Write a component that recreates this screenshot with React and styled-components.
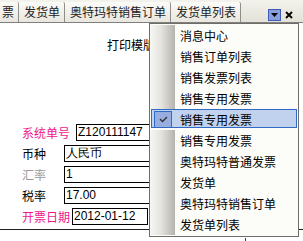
import React from 'react';
import styled, { createGlobalStyle } from 'styled-components';

const GlobalStyle = createGlobalStyle`
  html, body {
    margin: 0;
    padding: 0;
    background: #ffffff;
  }
  body {
    font-family: "Noto Sans CJK SC", "Liberation Sans", sans-serif;
    font-size: 12px;
  }
`;

const Page = styled.div`
  position: relative;
  width: 303px;
  height: 241px;
  overflow: hidden;
  background: #ffffff;
`;

const TabBar = styled.div`
  display: flex;
  align-items: flex-end;
  height: 22px;
  background: linear-gradient(#f3f2ec, #e3e1d8);
  border-bottom: 1px solid #7f7f7f;
  overflow: hidden;
`;

const TabStrip = styled.div`
  display: flex;
  align-items: flex-end;
  height: 20px;
`;

const Tab = styled.div`
  display: flex;
  align-items: center;
  height: 20px;
  padding: ${(p) => (p.$first ? '0 4px 0 2px' : '0 4px 0 5px')};
  border-right: 1px solid #8e8e8a;
  border-top-right-radius: 2px;
  background: linear-gradient(#fbfbf8, #e8e6de);
  color: #222;
  font-size: 12px;
  line-height: 1;
  white-space: nowrap;
`;

const Spacer = styled.div`
  flex: 1;
`;

const BarButtons = styled.div`
  display: flex;
  align-items: center;
  gap: 4px;
  align-self: stretch;
  padding: 8px 10px 0 0;
  box-sizing: border-box;
`;

const DropButton = styled.div`
  width: 13px;
  height: 12px;
  box-sizing: border-box;
  background: #8c9ed8;
  border: 1px solid #3b5bb8;
  display: flex;
  align-items: center;
  justify-content: center;
`;

const Body = styled.div`
  padding-top: 15px;
`;

const Title = styled.div`
  margin-left: 107px;
  height: 14px;
  line-height: 14px;
  font-size: 12px;
  color: #000;
  white-space: nowrap;
`;

const Form = styled.div`
  display: flex;
  flex-direction: column;
  gap: 4px;
  margin-top: 72px;
`;

const Row = styled.div`
  display: flex;
  align-items: center;
  padding-left: 22px;
  height: 17px;
`;

const Label = styled.div`
  width: ${(p) => p.$w}px;
  flex: none;
  font-size: 12px;
  color: ${(p) => p.$color || '#000'};
  white-space: nowrap;
`;

const Field = styled.div`
  flex: none;
  width: ${(p) => p.$w}px;
  height: 17px;
  box-sizing: border-box;
  border: 1px solid #000;
  padding-left: 1px;
  font-family: "Liberation Sans", Arial, sans-serif;
  font-size: 12px;
  line-height: 15px;
  color: #000;
  white-space: nowrap;
  overflow: hidden;
  background: #fff;
`;

const Divider = styled.div`
  margin-top: 4px;
  height: 1px;
  background: #202020;
`;

const GridHead = styled.div`
  display: flex;
  height: 12px;
  margin-top: 8px;
`;

const GridCell = styled.div`
  width: ${(p) => p.$w}px;
  border-right: 1px solid #404040;
  flex: none;
`;

const Menu = styled.div`
  position: absolute;
  left: 149px;
  top: 23px;
  width: 150px;
  box-sizing: border-box;
  padding: 1px 0;
  border: 1px solid #6e6d68;
  background: #fcfcf9;
`;

const Item = styled.div`
  position: relative;
  display: flex;
  align-items: center;
  height: 21px;
  color: #000;
  font-size: 12px;
  white-space: nowrap;
`;

const Gutter = styled.div`
  width: 25px;
  align-self: stretch;
  flex: none;
  visibility: ${(p) => (p.$hidden ? 'hidden' : 'visible')};
  background: linear-gradient(to right, #f7f7f5, #e4e3de 45%, #b4b3ad);
`;

const ItemText = styled.div`
  position: relative;
  padding-left: 5px;
`;

const Highlight = styled.div`
  position: absolute;
  left: 1px;
  right: 1px;
  top: 0;
  bottom: 2px;
  background: #c1d2ee;
  border: 1px solid #316ac5;
`;

const CheckBox = styled.div`
  position: absolute;
  left: 2px;
  top: 1px;
  width: 18px;
  height: 17px;
  box-sizing: border-box;
  background: #98aee0;
  border: 1px solid #316ac5;
  display: flex;
  align-items: center;
  justify-content: center;
`;

const tabs = ['票', '发货单', '奥特玛特销售订单', '发货单列表'];

const menuItems = [
  '消息中心',
  '销售订单列表',
  '销售发票列表',
  '销售专用发票',
  '销售专用发票',
  '销售专用发票',
  '奥特玛特普通发票',
  '发货单',
  '奥特玛特销售订单',
  '发货单列表',
];

const fields = [
  { label: '系统单号', w: 54, color: '#f0168c', value: 'Z120111147', fw: 120 },
  { label: '币种', w: 42, value: '人民币', fw: 120 },
  { label: '汇率', w: 42, color: '#9a9a9a', value: '1', fw: 120 },
  { label: '税率', w: 42, value: '17.00', fw: 120 },
  { label: '开票日期', w: 50, color: '#f0168c', value: '2012-01-12', fw: 76 },
];

const App = () => {
  const checked = 4;

  return (
    <React.Fragment>
      <GlobalStyle />
      <Page>
        <TabBar>
          <TabStrip>
            {tabs.map((t, i) => (
              <Tab key={i} $first={i === 0}>{t}</Tab>
            ))}
          </TabStrip>
          <Spacer />
          <BarButtons>
            <DropButton>
              <svg width="7" height="4" viewBox="0 0 7 4">
                <path d="M0 0h7L3.5 4z" fill="#000" />
              </svg>
            </DropButton>
            <svg width="8" height="8" viewBox="0 0 8 8">
              <path d="M1 1l6 6M7 1L1 7" stroke="#000" strokeWidth="1.8" />
            </svg>
          </BarButtons>
        </TabBar>
        <Body>
          <Title>打印模版设置</Title>
          <Form>
            {fields.map((f) => (
              <Row key={f.label}>
                <Label $w={f.w} $color={f.color}>{f.label}</Label>
                <Field $w={f.fw}>{f.value}</Field>
              </Row>
            ))}
          </Form>
          <Divider />
          <GridHead>
            <GridCell $w={245} />
          </GridHead>
        </Body>
        <Menu>
          {menuItems.map((m, i) => (
            <Item key={i}>
              {i === checked && (
                <Highlight>
                  <CheckBox>
                    <svg width="9" height="7" viewBox="0 0 9 7">
                      <path d="M1 3l2.5 2.5L8 1" stroke="#333" strokeWidth="1.4" fill="none" />
                    </svg>
                  </CheckBox>
                </Highlight>
              )}
              <Gutter $hidden={i === checked} />
              <ItemText>{m}</ItemText>
            </Item>
          ))}
        </Menu>
      </Page>
    </React.Fragment>
  );
};

export default App;
